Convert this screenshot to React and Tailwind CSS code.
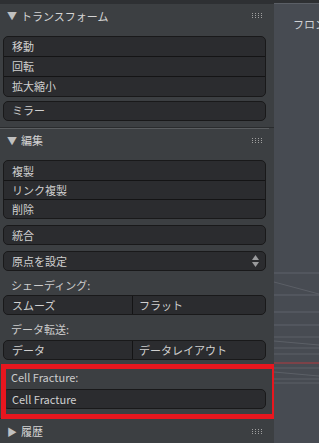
import React from "react";

const font = { fontFamily: '"Noto Sans CJK JP", "Noto Sans", sans-serif' };

function Grip() {
  return (
    <div className="grid grid-cols-4 gap-x-[2px] gap-y-[1px] mr-[12px]">
      {Array.from({ length: 12 }).map((_, i) => (
        <span key={i} className="w-[1px] h-[1px] bg-[#a0a0a0]" />
      ))}
    </div>
  );
}

function Header({ open, title }) {
  return (
    <div className="h-[24px] flex items-center justify-between text-[11px] text-[#d4d4d4]">
      <div className="flex items-center pl-[7px]">
        <span className="text-[10px] text-[#c0c0c0] w-[14px]">{open ? "▼" : "▶"}</span>
        <span>{title}</span>
      </div>
      <Grip />
    </div>
  );
}

function Group({ items, tall }) {
  return (
    <div className="mx-[3px] w-[263px] rounded-[5px] border border-[#19191a] bg-[#2b2c2f] overflow-hidden">
      {items.map((t, i) => (
        <div
          key={t}
          className={`flex items-center pl-[8px] text-[11px] text-[#d0d0d0] ${
            i > 0 ? "border-t border-[#141415]" : ""
          } ${tall && i > 0 ? "h-[20px]" : "h-[19px]"}`}
        >
          {t}
        </div>
      ))}
    </div>
  );
}

function Button({ children, right }) {
  return (
    <div className="mx-[3px] w-[263px] h-[20px] rounded-[5px] border border-[#19191a] bg-[#2b2c2f] flex items-center justify-between pl-[8px] pr-[6px] text-[11px] text-[#d0d0d0]">
      <span>{children}</span>
      {right}
    </div>
  );
}

function Split({ a, b }) {
  return (
    <div className="mx-[3px] w-[263px] h-[20px] rounded-[5px] border border-[#19191a] bg-[#2b2c2f] flex text-[11px] text-[#d0d0d0] overflow-hidden">
      <div className="w-[129px] flex items-center pl-[8px] border-r border-[#141415]">{a}</div>
      <div className="flex-1 flex items-center pl-[6px]">{b}</div>
    </div>
  );
}

function Label({ children, className = "" }) {
  return (
    <div className={`flex items-center pl-[11px] pt-[3px] text-[11px] text-[#cccccc] ${className}`}>
      {children}
    </div>
  );
}

function Arrows() {
  return (
    <svg width="7" height="12" viewBox="0 0 7 12">
      <path d="M3.5 0 L7 5 L0 5 Z" fill="#9a9b9d" />
      <path d="M0 7 L7 7 L3.5 12 Z" fill="#9a9b9d" />
    </svg>
  );
}

function Viewport() {
  return (
    <div className="flex-1 bg-[#474b52] relative overflow-hidden">
      <div className="h-[4px] bg-[#2e3033] border-b border-[#5b5f66]" />
      <div className="pl-[19px] pt-[12px] text-[11px] text-[#cfd1d4] whitespace-nowrap">
        フロン
      </div>
      <svg className="absolute left-0 top-0" width="45" height="443" viewBox="0 0 45 443">
        <line x1="0" y1="273" x2="45" y2="273" stroke="#5f636a" strokeWidth="1" />
        <line x1="0" y1="282" x2="45" y2="294" stroke="#5b5f66" strokeWidth="1" />
        <line x1="0" y1="295" x2="45" y2="295" stroke="#5f636a" strokeWidth="1" />
        <line x1="0" y1="312" x2="45" y2="312" stroke="#5f636a" strokeWidth="1" />
        <line x1="0" y1="325" x2="45" y2="325" stroke="#5f636a" strokeWidth="1" />
        <line x1="0" y1="337" x2="45" y2="337" stroke="#5c6067" strokeWidth="1" />
        <line x1="0" y1="341" x2="45" y2="345" stroke="#5c6067" strokeWidth="1" />
        <line x1="0" y1="348" x2="45" y2="348" stroke="#5c6067" strokeWidth="1" />
        <line x1="0" y1="354" x2="45" y2="354" stroke="#5c6067" strokeWidth="1" />
        <line x1="0" y1="363" x2="45" y2="363" stroke="#b23a3f" strokeWidth="1" />
        <line x1="0" y1="368" x2="45" y2="368" stroke="#5c6067" strokeWidth="1" />
        <line x1="0" y1="372" x2="45" y2="376" stroke="#5c6067" strokeWidth="1" />
        <line x1="0" y1="379" x2="45" y2="379" stroke="#5c6067" strokeWidth="1" />
        <line x1="0" y1="383" x2="45" y2="383" stroke="#5c6067" strokeWidth="1" />
      </svg>
    </div>
  );
}

export default function App() {
  return (
    <div className="w-[319px] h-[443px] flex bg-[#3c3f42] overflow-hidden" style={font}>
      <div className="w-[274px] shrink-0 bg-[#3c3f42] flex flex-col relative">
        <div className="h-[4px] bg-[#2e3033]" />
        <Header open title="トランスフォーム" />
        <div className="mt-[8px]">
          <Group tall items={["移動", "回転", "拡大縮小"]} />
        </div>
        <div className="mt-[4px]">
          <Button>ミラー</Button>
        </div>
        <div className="mt-[6px] h-[1px] bg-[#2a2c2e]" />
        <div className="h-[1px] bg-[#5a5d60] mr-[5px]" />
        <Header open title="編集" />
        <div className="mt-[8px]">
          <Group items={["複製", "リンク複製", "削除"]} />
        </div>
        <div className="mt-[6px]">
          <Button>統合</Button>
        </div>
        <div className="mt-[6px]">
          <Button right={<Arrows />}>原点を設定</Button>
        </div>
        <Label className="h-[24px]">シェーディング:</Label>
        <Split a="スムーズ" b="フラット" />
        <Label className="h-[25px]">データ転送:</Label>
        <Split a="データ" b="データレイアウト" />
        <Label className="h-[28px] mt-[2px]">Cell Fracture:</Label>
        <Button>Cell Fracture</Button>
        <div className="mt-[9px] h-[1px] bg-[#2a2c2e]" />
        <Header title="履歴" />
        <div className="absolute left-[1px] top-[364px] w-[276px] h-[55px] border-[5px] border-[#e8161e] pointer-events-none" />
      </div>
      <Viewport />
    </div>
  );
}
